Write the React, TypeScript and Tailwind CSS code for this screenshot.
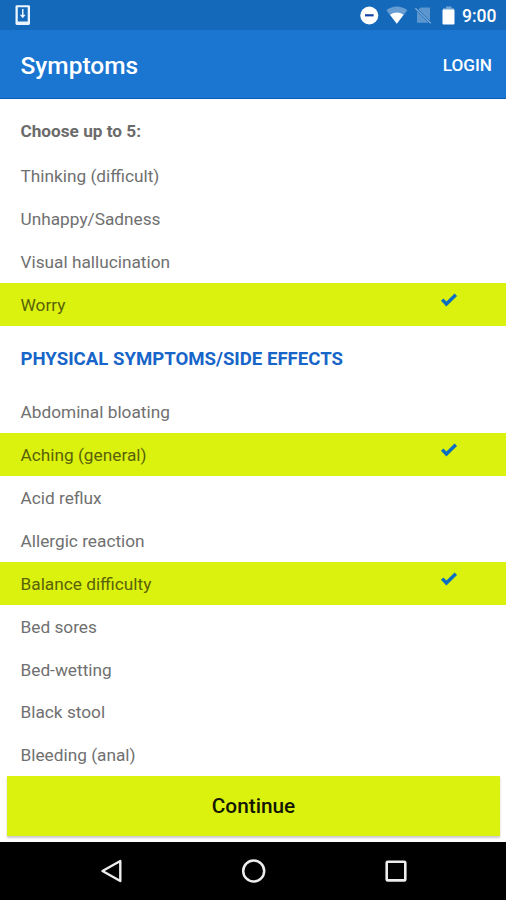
import React, { useState } from "react";

interface SymptomRowProps {
  name: string;
  selected: boolean;
  onToggle: (name: string) => void;
}

const MAX_SYMPTOMS = 5;

const mentalSymptoms: string[] = [
  "Thinking (difficult)",
  "Unhappy/Sadness",
  "Visual hallucination",
  "Worry",
];

const physicalSymptoms: string[] = [
  "Abdominal bloating",
  "Aching (general)",
  "Acid reflux",
  "Allergic reaction",
  "Balance difficulty",
  "Bed sores",
  "Bed-wetting",
  "Black stool",
  "Bleeding (anal)",
];

const StatusBar: React.FC = () => (
  <div className="flex h-[30px] shrink-0 items-center justify-between bg-[#1569ba] pl-[15px] pr-[9px] text-white">
    <svg width="16" height="20" viewBox="0 0 16 20">
      <path
        fillRule="evenodd"
        fill="#eaf5ff"
        d="M1.8.3h11.9a1.3 1.3 0 0 1 1.3 1.3v17a1.3 1.3 0 0 1-1.3 1.3H1.8a1.3 1.3 0 0 1-1.3-1.3v-17A1.3 1.3 0 0 1 1.8.3zM2.8 2.3v14.2h9.9V2.3z"
      />
      <path fill="#eaf5ff" d="M7 4h1.5v5.7h2.2L7.75 13.200 4.8 9.700H7z" />
    </svg>
    <div className="flex items-center">
      <svg className="h-[30px] w-[102px]" viewBox="0 0 102 30">
        {/* do not disturb */}
        <circle cx="9.3" cy="15.5" r="9" fill="#fff" />
        <rect x="5" y="14.2" width="8.6" height="2.2" fill="#1543a8" />
        {/* wifi */}
        <path fill="#fff" fillOpacity=".35" d="M26.3 10.3Q36.8 2.8 47.3 10.3L36.8 23.8z" />
        <path fill="#fff" d="M30 14.8Q36.8 10.3 43.6 14.8L36.8 23.8z" />
        {/* no sim */}
        <path fill="#fff" fillOpacity=".3" d="M60.5 7.5H70v13.2L58.5 9.5zM57 11.500L68.5 22.800H57z" />
        <path stroke="#fff" strokeOpacity=".4" strokeWidth="1.5" d="M55.3 8.3L70.8 23.3" />
        {/* battery */}
        <path fill="#fff" fillOpacity=".4" d="M86 6.5h5.500v1.800H94V11H83V8.300h3z" />
        <rect x="82.5" y="9.6" width="12" height="15" rx="1" fill="#fff" />
      </svg>
      <span className="w-[35px] pt-px text-[17.5px] font-medium leading-[30px]">9:00</span>
    </div>
  </div>
);

const CheckMark: React.FC = () => (
  <svg width="18" height="14" viewBox="0 0 18 14" fill="none">
    <path d="M2.2 6.6L6.4 10.9L15.8 1.7" stroke="#0a6fc0" strokeWidth="3.5" />
  </svg>
);

const SymptomRow: React.FC<SymptomRowProps> = ({ name, selected, onToggle }) => (
  <li
    onClick={() => onToggle(name)}
    className={`flex h-[42.9px] justify-between pl-[20.5px] pr-[48px] ${
      selected ? "bg-[#dbf20f] text-[#596208]" : "text-[#707070]"
    }`}
  >
    <span className="text-[17.25px] leading-[44.3px]">{name}</span>
    {selected && (
      <span className="pt-[10px]">
        <CheckMark />
      </span>
    )}
  </li>
);

const NavigationBar: React.FC = () => (
  <div className="flex h-[58.5px] shrink-0 items-center justify-center bg-black">
    <svg width="310" height="28" viewBox="0 0 310 28" fill="none" stroke="#ededed">
      <path d="M4.5 14L22.3 4v20z" strokeWidth="2.4" strokeLinejoin="round" />
      <circle cx="155.7" cy="14" r="10.5" strokeWidth="2.5" />
      <rect x="288.7" y="4.8" width="18.6" height="18.6" rx="1" strokeWidth="2.6" />
    </svg>
  </div>
);

const App: React.FC = () => {
  const [selected, setSelected] = useState<string[]>([
    "Worry",
    "Aching (general)",
    "Balance difficulty",
  ]);

  const handleToggle = (name: string) => {
    if (selected.includes(name)) {
      setSelected(selected.filter((item) => item !== name));
    } else if (selected.length < MAX_SYMPTOMS) {
      setSelected([...selected, name]);
    }
  };

  const renderRow = (name: string) => (
    <SymptomRow
      key={name}
      name={name}
      selected={selected.includes(name)}
      onToggle={handleToggle}
    />
  );

  return (
    <div className="flex h-[900px] w-[506px] flex-col overflow-hidden bg-white font-[Roboto,sans-serif]">
      <StatusBar />
      <header className="flex h-[69px] shrink-0 items-center justify-between border-b border-[#0c5bbb] bg-[#1b76d2] pl-[20.5px] pr-[14px] text-white">
        <h1 className="pt-1 text-[24.5px] font-medium leading-[68px]">Symptoms</h1>
        <button className="pt-1 text-[17.2px] font-medium">LOGIN</button>
      </header>

      <main className="flex h-[677px] shrink-0 flex-col overflow-hidden">
        <p className="h-[55.4px] shrink-0 pl-[20.5px] text-[17.2px] font-bold leading-[64px] text-[#6b6b6b]">
          Choose up to 5:
        </p>
        <ul>{mentalSymptoms.map(renderRow)}</ul>
        <h2 className="h-[64.3px] shrink-0 pl-[20.5px] text-[18.6px] font-bold leading-[66.5px] text-[#1765c8]">
          PHYSICAL SYMPTOMS/SIDE EFFECTS
        </h2>
        <ul>{physicalSymptoms.map(renderRow)}</ul>
      </main>

      <div className="h-[65.5px] shrink-0 pl-[7px] pr-[6px]">
        <button className="block h-[60px] w-full bg-[#dbf20f] pt-[2px] text-[20.8px] font-medium text-[#141703] shadow-[0_2px_2px_#c9c9d2]">
          Continue
        </button>
      </div>
      <NavigationBar />
    </div>
  );
};

export default App;
